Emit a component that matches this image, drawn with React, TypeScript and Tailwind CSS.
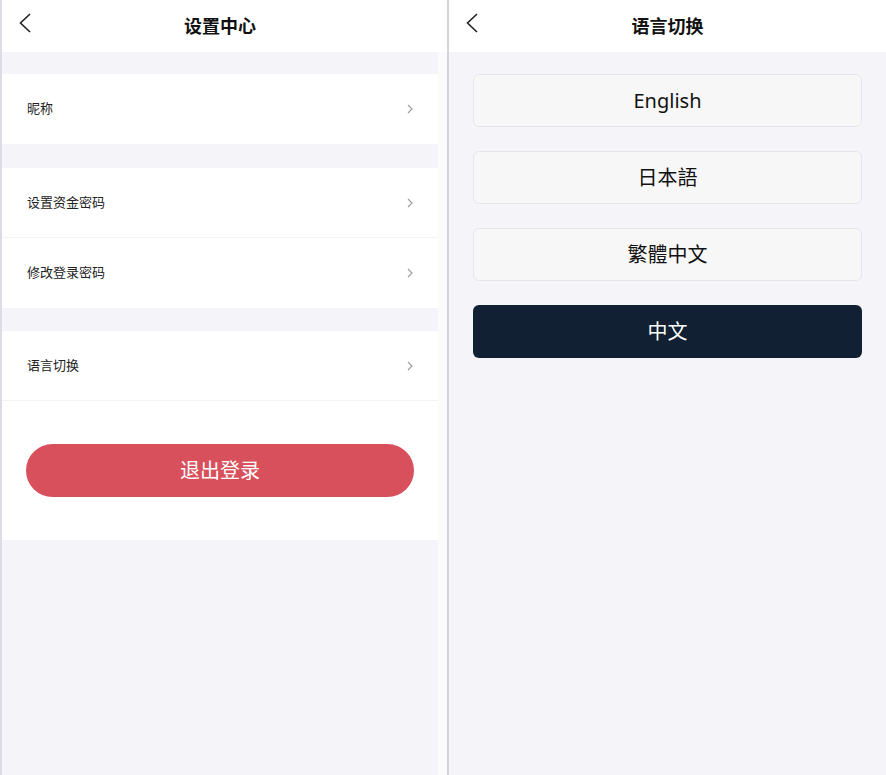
import { type ReactNode } from "react";

const font = {
  fontFamily: '"Noto Sans", "Noto Sans CJK SC", sans-serif',
};

const BackIcon = () => (
  <svg width="14" height="20" viewBox="0 0 14 20" fill="none">
    <path d="M12 1L2.5 10l9.5 9" stroke="#222" strokeWidth="1.6" />
  </svg>
);

const Chevron = () => (
  <svg width="6" height="10" viewBox="0 0 6 10" fill="none">
    <path d="M1 1l4 4-4 4" stroke="#9a9aa3" strokeWidth="1.1" />
  </svg>
);

function Header({ title }: { title: string }) {
  return (
    <div className="relative flex h-[52px] shrink-0 items-center justify-center bg-white">
      <span className="absolute left-[16px] top-[13px]">
        <BackIcon />
      </span>
      <span className="text-[18px] font-bold text-[#111]">{title}</span>
    </div>
  );
}

function Row({ label, divider }: { label: string; divider?: boolean }) {
  return (
    <div
      className={`flex h-[70px] items-center justify-between bg-white pl-[25px] pr-[25px] ${divider ? "border-b border-[#f3f3f6]" : ""}`}
    >
      <span className="text-[13px] text-[#222]">{label}</span>
      <Chevron />
    </div>
  );
}

function Gap({ h }: { h: string }) {
  return <div className={`${h} bg-[#f5f5f9]`} />;
}

function LangButton({ children, active }: { children: ReactNode; active?: boolean }) {
  return (
    <div
      className={`flex h-[53px] items-center justify-center rounded-[6px] text-[20px] ${
        active
          ? "bg-[#112033] text-white"
          : "border border-[#e6e6ea] bg-[#f7f7f8] text-[#111]"
      }`}
    >
      {children}
    </div>
  );
}

export default function App() {
  return (
    <div className="flex h-[775px] w-[886px] overflow-hidden bg-white" style={font}>
      {/* left: settings */}
      <div className="flex w-[447px] shrink-0 border-l-2 border-[#dcdce4]">
        <div className="flex w-[436px] flex-col">
          <Header title="设置中心" />
          <Gap h="h-[22px]" />
          <Row label="昵称" />
          <Gap h="h-[24px]" />
          <Row label="设置资金密码" divider />
          <Row label="修改登录密码" />
          <Gap h="h-[23px]" />
          <Row label="语言切换" divider />
          <div className="flex h-[139px] items-center bg-white px-[24px]">
            <div className="flex h-[53px] w-full items-center justify-center rounded-full bg-[#d8505c] text-[20px] text-white">
              退出登录
            </div>
          </div>
          <div className="flex-1 bg-[#f5f5f9]" />
        </div>
        <div className="mt-[52px] w-[9px] bg-[#fbfbfc]" />
      </div>

      {/* right: language */}
      <div className="flex flex-1 flex-col border-l-2 border-[#d4d4dc]">
        <Header title="语言切换" />
        <div className="flex flex-1 flex-col gap-[24px] bg-[#f5f5f9] px-[24px] pt-[22px]">
          <LangButton>English</LangButton>
          <LangButton>日本語</LangButton>
          <LangButton>繁體中文</LangButton>
          <LangButton active>中文</LangButton>
        </div>
      </div>
    </div>
  );
}
